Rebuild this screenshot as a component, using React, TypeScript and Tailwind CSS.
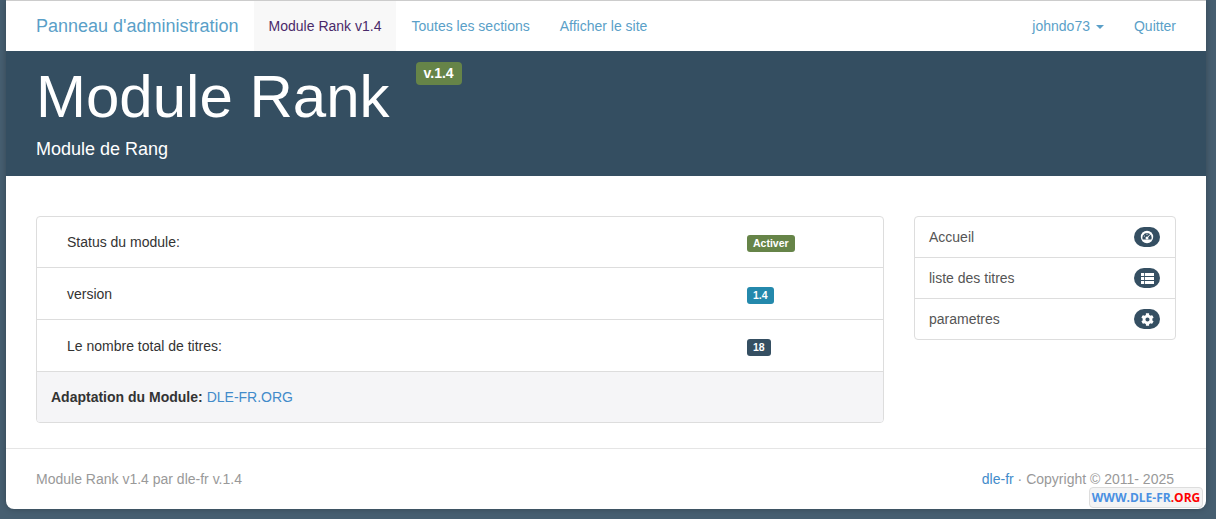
import { FaCog } from "react-icons/fa";

const linkCls = "text-[14px] text-[#5a9fc8] px-[15px] h-[50px] flex items-center";

function Gauge() {
  return (
    <svg width="14" height="14" viewBox="0 0 14 14">
      <circle cx="7" cy="7" r="6.2" fill="#ffffff" />
      <path d="M2.8 9.6A4.6 4.6 0 1 1 11.2 9.6Z" fill="#354f62" />
      <circle cx="7" cy="8" r="1.5" fill="#ffffff" />
      <path d="M7 8L10 4.6" stroke="#ffffff" strokeWidth="1" />
      <circle cx="4.4" cy="6" r="0.6" fill="#ffffff" />
      <circle cx="7" cy="4.2" r="0.6" fill="#ffffff" />
    </svg>
  );
}

function TableIcon() {
  return (
    <svg width="13" height="11" viewBox="0 0 13 11">
      <rect x="0" y="0" width="13" height="11" fill="#ffffff" />
      <path d="M0 3.5H13M0 7.5H13" stroke="#354f62" strokeWidth="1" />
      <path d="M3.5 0V11" stroke="#354f62" strokeWidth="0.8" />
    </svg>
  );
}

function ListRow({ label, icon, last }: { label: string; icon: React.ReactNode; last?: boolean }) {
  return (
    <div className={`flex items-center justify-between pl-[14px] pr-[15px] text-[14px] text-[#555555] ${last ? "h-[40px]" : "h-[41px] border-b border-[#dddddd]"}`}>
      <span>{label}</span>
      <span className="w-[26px] h-[20px] rounded-full bg-[#354f62] text-white flex items-center justify-center text-[13px]">{icon}</span>
    </div>
  );
}

function StatRow({ label, badge, color, first }: { label: string; badge: string; color: string; first?: boolean }) {
  return (
    <div className={`flex items-center border-b border-[#dddddd] text-[14px] text-[#333333] ${first ? "h-[51px]" : "h-[52px] pt-[2px]"}`}>
      <div className="w-[710px] pl-[30px]">{label}</div>
      <span className={`${color} text-white font-bold text-[10.5px] leading-none px-[6px] h-[17px] flex items-center rounded-[3px] ${first ? "mt-[3px]" : "mt-[1px]"}`}>{badge}</span>
    </div>
  );
}

export default function App() {
  return (
    <div className="min-h-screen bg-[#465e70] pl-[6px] pr-[10px] pb-[10px] font-['Liberation_Sans',Arial,sans-serif]">
      <div className="relative bg-white border-t border-[#cccccc] rounded-b-[8px] shadow-[0_0_6px_rgba(0,0,0,0.25)]">
        <nav className="h-[50px] flex items-center justify-between px-[15px]">
          <div className="flex items-center">
            <span className="text-[18px] text-[#5a9fc8] px-[15px]">Panneau d'administration</span>
            <span className="text-[14px] text-[#4a2a6a] bg-[#f8f8f8] px-[15px] h-[50px] flex items-center">Module Rank v1.4</span>
            <span className={linkCls}>Toutes les sections</span>
            <span className={linkCls}>Afficher le site</span>
          </div>
          <div className="flex items-center">
            <span className={linkCls}>
              johndo73
              <span className="ml-[6px] mt-[1px] w-0 h-0 border-x-[4px] border-x-transparent border-t-[4px] border-t-[#5a9fc8]" />
            </span>
            <span className={linkCls}>Quitter</span>
          </div>
        </nav>
        <header className="h-[125px] bg-[#344e61] px-[30px] text-white">
          <div className="flex items-start">
            <h1 className="text-[60px] leading-[69px] mt-[11px]">Module Rank</h1>
            <span className="ml-[26px] mt-[11px] h-[23px] px-[8px] rounded-[4px] bg-[#668448] text-[14px] font-bold flex items-center">v.1.4</span>
          </div>
          <p className="text-[18px] leading-[20px] mt-[8px]">Module de Rang</p>
        </header>
        <main className="flex items-start justify-between px-[30px] pt-[40px] pb-[25px]">
          <section className="w-[848px] border border-[#dddddd] rounded-[4px] overflow-hidden">
            <StatRow first label="Status du module:" badge="Activer" color="bg-[#668448]" />
            <StatRow label="version" badge="1.4" color="bg-[#2489ac]" />
            <StatRow label="Le nombre total de titres:" badge="18" color="bg-[#354f62]" />
            <div className="h-[50px] bg-[#f5f5f7] flex items-center px-[14px] text-[14px] text-[#333333]">
              <strong>Adaptation du Module:</strong>
              <span className="ml-[4px] text-[#428bca]">DLE-FR.ORG</span>
            </div>
          </section>
          <aside className="w-[262px] border border-[#dddddd] rounded-[4px]">
            <ListRow label="Accueil" icon={<Gauge />} />
            <ListRow label="liste des titres" icon={<TableIcon />} />
            <ListRow label="parametres" icon={<FaCog />} last />
          </aside>
        </main>
        <footer className="h-[61px] border-t border-[#e5e5e5] flex items-center justify-between pl-[30px] pr-[32px] text-[14px] text-[#999999]">
          <span>Module Rank v1.4 par dle-fr v.1.4</span>
          <span>
            <span className="text-[#428bca]">dle-fr</span> · Copyright © 2011- 2025
          </span>
        </footer>
        <div className="absolute right-[3px] bottom-[1px] h-[21px] w-[114px] flex items-center justify-center whitespace-nowrap bg-[#f4f4f4] border border-[#dddddd] rounded-[4px] text-[12px] font-bold font-['Open_Sans',sans-serif]">
          <span className="text-[#4a90e2]">WWW.DLE-FR</span>
          <span className="text-[#ff0000]">.ORG</span>
        </div>
      </div>
    </div>
  );
}
